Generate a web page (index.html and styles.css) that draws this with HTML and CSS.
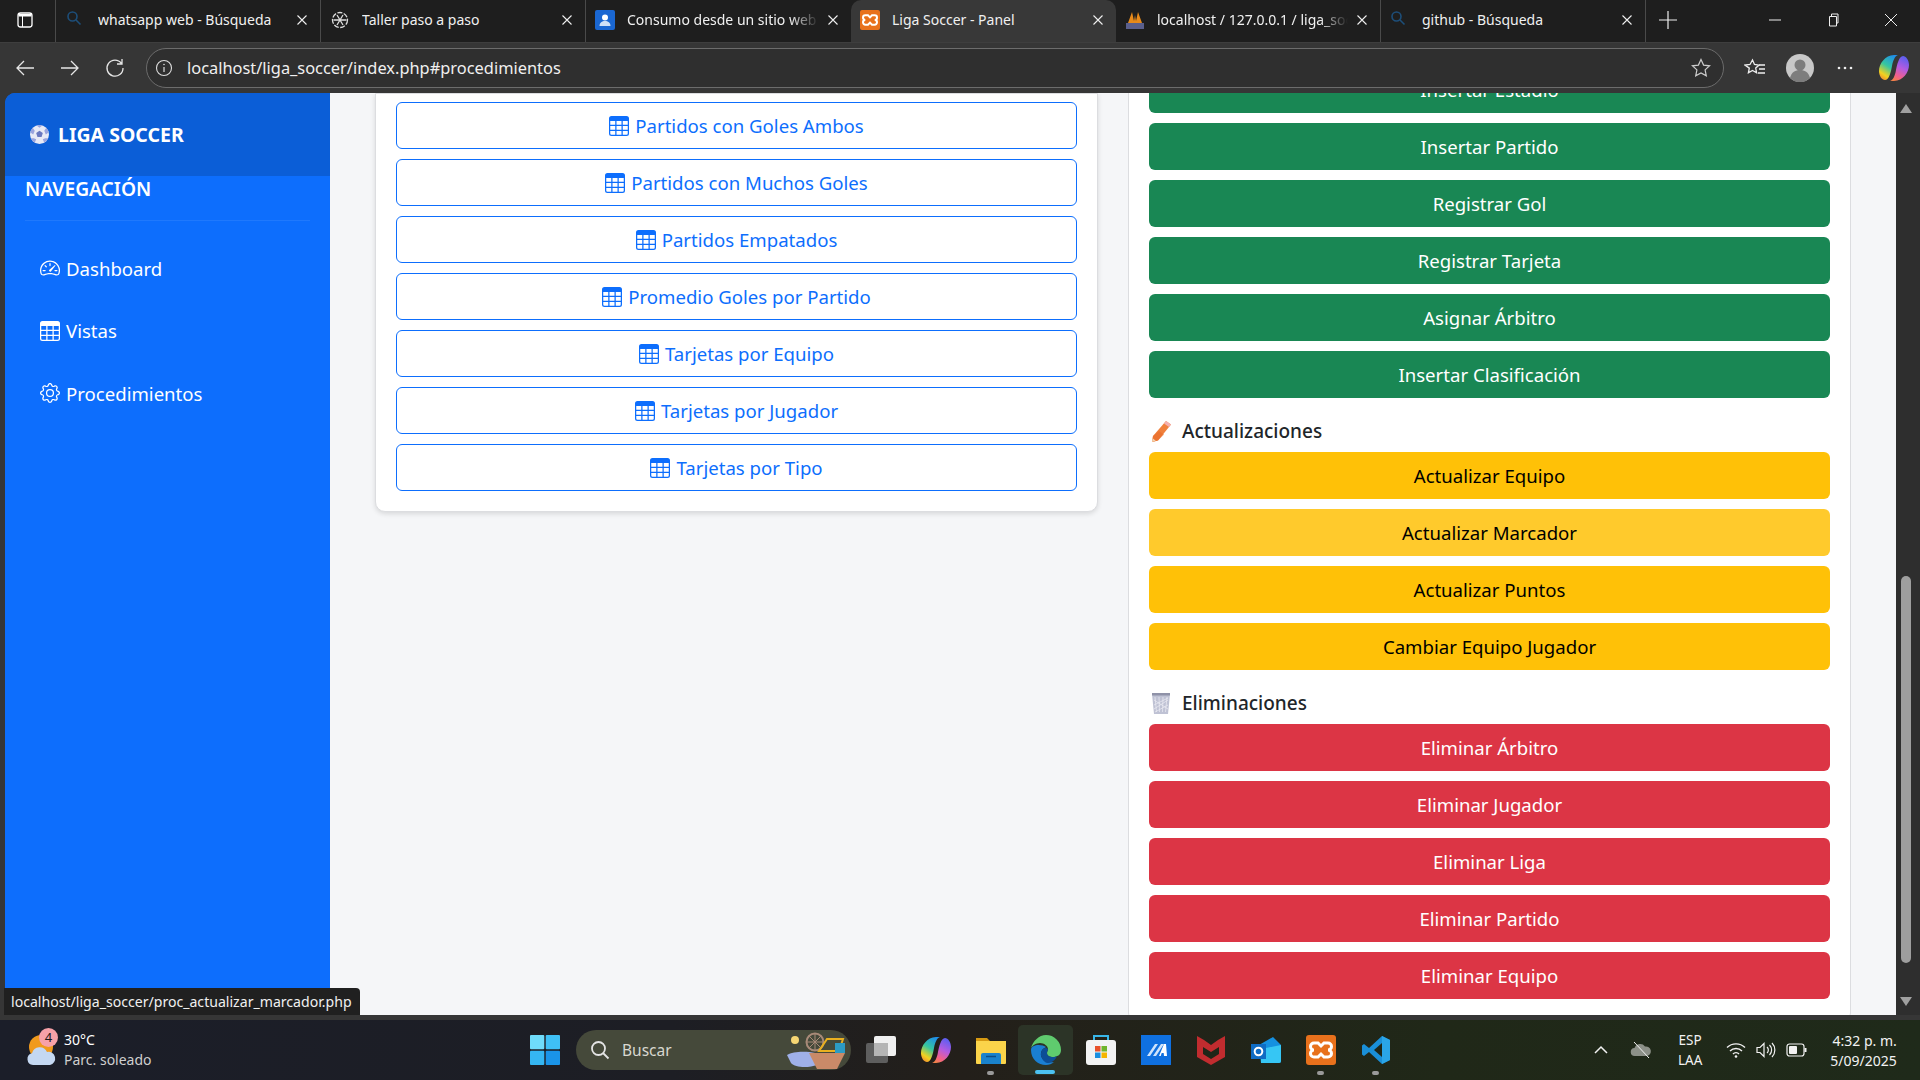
FILE: index.html
```html
<!DOCTYPE html>
<html lang="es">
<head>
    <meta charset="UTF-8">
    <title>Liga Soccer - Panel</title>
    <link rel="stylesheet" href="styles.css">
</head>
<body>
    <svg class="defs" width="0" height="0">
        <defs>
            <linearGradient id="g-left" x1="0.700" y1="0" x2="0.200" y2="1"><stop offset="0" stop-color="#1f8fe8"/><stop offset=".45" stop-color="#36c6a0"/><stop offset=".8" stop-color="#f2d21f"/><stop offset="1" stop-color="#f09030"/></linearGradient>
            <linearGradient id="g-right" x1="0.700" y1="0" x2="0.300" y2="1"><stop offset="0" stop-color="#5a5ff0"/><stop offset=".45" stop-color="#b45be0"/><stop offset=".8" stop-color="#f2608a"/><stop offset="1" stop-color="#f2804a"/></linearGradient>
        </defs>
        <symbol id="i-table" viewBox="0 0 16 16"><path fill="currentColor" d="M0 2a2 2 0 0 1 2-2h12a2 2 0 0 1 2 2v12a2 2 0 0 1-2 2H2a2 2 0 0 1-2-2V2zm15 2h-4v3h4V4zm0 4h-4v3h4V8zm0 4h-4v3h3a1 1 0 0 0 1-1v-2zm-5 3v-3H6v3h4zm-5 0v-3H1v2a1 1 0 0 0 1 1h3zm-4-4h4V8H1v3zm0-4h4V4H1v3zm5-3v3h4V4H6zm4 4H6v3h4V8z"/></symbol>
        <symbol id="i-close" viewBox="0 0 12 12"><path d="M1.5 1.5l9 9M10.500 1.500l-9 9" stroke="currentColor" stroke-width="1.1" fill="none"/></symbol>
        <symbol id="i-search" viewBox="0 0 20 20"><circle cx="6.500" cy="6.500" r="4.500" fill="none" stroke="#1d4e79" stroke-width="1.600"/><path d="M10 10l4.500 4.500" stroke="#1d4e79" stroke-width="1.600"/></symbol>
        <symbol id="i-xampp" viewBox="0 0 30 30"><rect width="30" height="30" rx="3" fill="#e8711c"/><path d="M8 8h4l3 3 3-3h4a3 3 0 0 1 0 7 3 3 0 0 1 0 7h-4l-3-3-3 3H8a3 3 0 0 1 0-7 3 3 0 0 1 0-7z" fill="none" stroke="#fff" stroke-width="3"/></symbol>
        <symbol id="i-copilot" viewBox="0 0 30 28"><path d="M15 1h4c-3 1-5 5-6 11-1 6-3 14-7 14-3 0-6-4-6-9C0 10 6 1 15 1z" fill="url(#g-left)"/><path d="M15 27h-4c3-1 5-5 6-11 1-5 3-14 7-14 3 0 6 4 6 9 0 7-6 16-15 16z" fill="url(#g-right)"/></symbol>
    </svg>

    <div class="tabstrip">
        <svg class="side-toggle" width="20" height="20" viewBox="0 0 20 20"><rect x="3" y="3" width="14" height="14" rx="2.500" fill="none" stroke="#fff" stroke-width="1.300"/><path d="M3.500 4h13v2.500h-13z" fill="#fff"/><path d="M7.500 6v11" stroke="#fff" stroke-width="1"/></svg>
        <div class="tab sep first">
            <svg class="favicon"><use href="#i-search"/></svg>
            <span class="tab-title">whatsapp web - Búsqueda</span>
            <svg class="tab-close"><use href="#i-close"/></svg>
        </div>
        <div class="tab sep">
            <svg class="favicon" viewBox="0 0 20 20"><g fill="none" stroke="#ddd" stroke-width="1.300"><circle cx="10" cy="10" r="7.500" stroke-dasharray="5 1.500"/><path d="M7 5l6 10M13 5L7 15M3.500 10h13"/></g></svg>
            <span class="tab-title">Taller paso a paso</span>
            <svg class="tab-close"><use href="#i-close"/></svg>
        </div>
        <div class="tab">
            <svg class="favicon" viewBox="0 0 20 20"><rect width="20" height="20" rx="2" fill="#1a67d2"/><circle cx="10" cy="7.500" r="3" fill="#fff"/><path d="M4.500 16c0-3.500 2.500-5 5.500-5s5.500 1.500 5.500 5z" fill="#cfe0f7"/></svg>
            <span class="tab-title fade">Consumo desde un sitio web</span>
            <svg class="tab-close"><use href="#i-close"/></svg>
        </div>
        <div class="tab tab-active">
            <svg class="favicon"><use href="#i-xampp"/></svg>
            <span class="tab-title">Liga Soccer - Panel</span>
            <svg class="tab-close"><use href="#i-close"/></svg>
        </div>
        <div class="tab sep">
            <svg class="favicon" viewBox="0 0 20 20"><path d="M3 13L7 2l2 9 1-6 1 6 2-9 4 11z" fill="#e88a1a"/><rect x="1" y="13" width="18" height="6" fill="#5a5f8c"/></svg>
            <span class="tab-title fade">localhost / 127.0.0.1 / liga_soccer</span>
            <svg class="tab-close"><use href="#i-close"/></svg>
        </div>
        <div class="tab sep">
            <svg class="favicon"><use href="#i-search"/></svg>
            <span class="tab-title">github - Búsqueda</span>
            <svg class="tab-close"><use href="#i-close"/></svg>
        </div>
        <svg class="new-tab" width="20" height="20" viewBox="0 0 20 20"><path d="M10 1v18M1 10h18" stroke="#eee" stroke-width="1.200"/></svg>
        <div class="win-btns">
            <svg width="14" height="14" viewBox="0 0 14 14"><path d="M1 7h12" stroke="#eee" stroke-width="1"/></svg>
            <svg width="14" height="14" viewBox="0 0 14 14"><path d="M3.500 3.500h7v9.500h-7zM5.500 3.500V1h6.500v9h-1.500" fill="none" stroke="#eee" stroke-width="1"/></svg>
            <svg width="14" height="14" viewBox="0 0 14 14"><path d="M1 1l12 12M13 1L1 13" stroke="#eee" stroke-width="1"/></svg>
        </div>
    </div>

    <div class="toolbar">
        <svg class="nav-ico" viewBox="0 0 22 22"><path d="M20 11H3M10 4l-7 7 7 7" fill="none" stroke="#e6e6e6" stroke-width="1.300"/></svg>
        <svg class="nav-ico" viewBox="0 0 22 22"><path d="M2 11h17M12 4l7 7-7 7" fill="none" stroke="#e6e6e6" stroke-width="1.300"/></svg>
        <svg class="nav-ico" viewBox="0 0 22 22"><path d="M17.500 6.500A8 8 0 1 0 19 11M18 2v5h-5" fill="none" stroke="#e6e6e6" stroke-width="1.300"/></svg>
        <div class="addressbar">
            <svg width="18" height="18" viewBox="0 0 18 18"><circle cx="9" cy="9" r="7.500" fill="none" stroke="#ddd" stroke-width="1.100"/><path d="M9 8v5" stroke="#ddd" stroke-width="1.200"/><circle cx="9" cy="5.500" r=".8" fill="#ddd"/></svg>
            <span class="url">localhost/liga_soccer/index.php#procedimientos</span>
            <svg class="star" width="22" height="22" viewBox="0 0 22 22"><path d="M11 2.500l2.600 5.600 6 .7-4.500 4.100 1.200 6L11 16l-5.300 2.900 1.200-6-4.500-4.100 6-.7z" fill="none" stroke="#ccc" stroke-width="1.200"/></svg>
        </div>
        <div class="tool-icons">
            <svg width="22" height="22" viewBox="0 0 22 22"><path d="M8.500 3l2 4.500 4.500.6-3.300 3 .9 4.700-4.100-2.400-4.100 2.400.9-4.700L1 8.100l5-.6z" fill="none" stroke="#eee" stroke-width="1.300"/><path d="M15 8h6M15 12h6M14 16h7" stroke="#eee" stroke-width="1.300"/></svg>
            <svg width="28" height="28" viewBox="0 0 28 28"><circle cx="14" cy="14" r="14" fill="#c8c8c8"/><circle cx="14" cy="11" r="5.500" fill="#7d7d7d"/><path d="M4 24c1.500-6 5.500-8 10-8s8.500 2 10 8a14 14 0 0 1-20 0z" fill="#7d7d7d"/></svg>
            <svg width="22" height="22" viewBox="0 0 22 22"><g fill="#eee"><circle cx="5" cy="11" r="1.300"/><circle cx="11" cy="11" r="1.300"/><circle cx="17" cy="11" r="1.300"/></g></svg>
            <svg class="tool-copilot" width="30" height="28"><use href="#i-copilot"/></svg>
        </div>
    </div>

    <div class="viewport">
        <aside class="sidebar">
            <div class="brand">
                <svg class="ball" width="19" height="19" viewBox="0 0 20 20"><circle cx="10" cy="10" r="10" fill="#e8eaf6"/><path d="M10 6l3.500 2.500-1.300 4.200H7.800L6.500 8.500z" fill="#6a78c0"/><path d="M7 .5L10 3l3-2.500A10 10 0 0 0 7 .5zM.4 8l3 2L5 6 2.800 3A10 10 0 0 0 .4 8zM19.600 8l-3 2L15 6l2.200-3A10 10 0 0 1 19.600 8zM5 18.600l1.500-3.600L4 14H.9A10 10 0 0 0 5 18.600zM15 18.600L13.500 15l2.500-1h3.100A10 10 0 0 1 15 18.600z" fill="#9aa4de"/></svg>
                <span>LIGA SOCCER</span>
            </div>
            <div class="nav-title">NAVEGACIÓN</div>
            <nav class="nav-list">
                <a class="nav-link">
                    <svg width="20" height="20" viewBox="0 0 16 16"><g fill="currentColor"><path d="M8 4a.5.5 0 0 1 .5.5V6a.5.5 0 0 1-1 0V4.500A.5.5 0 0 1 8 4zM3.732 5.732a.5.5 0 0 1 .707 0l.915.914a.5.5 0 1 1-.708.708l-.914-.915a.5.5 0 0 1 0-.707zM2 10a.5.5 0 0 1 .5-.5h1.586a.5.5 0 0 1 0 1H2.500A.5.5 0 0 1 2 10zm9.500 0a.5.5 0 0 1 .5-.5h1.500a.5.5 0 0 1 0 1H12a.5.5 0 0 1-.5-.5zm.754-4.246a.389.389 0 0 0-.527-.02L7.547 9.310a.91.91 0 1 0 1.302 1.258l3.434-4.297a.389.389 0 0 0-.029-.518z"/><path fill-rule="evenodd" d="M0 10a8 8 0 1 1 15.547 2.661c-.442 1.253-1.845 1.602-2.932 1.250C11.309 13.488 9.475 13 8 13c-1.474 0-3.310.488-4.615.911-1.087.352-2.490.003-2.932-1.250A7.988 7.988 0 0 1 0 10zm8-7a7 7 0 0 0-6.603 9.329c.203.575.923.876 1.680.630C4.397 12.533 6.358 12 8 12s3.604.532 4.923.96c.757.245 1.477-.056 1.680-.631A7 7 0 0 0 8 3z"/></g></svg>
                    Dashboard
                </a>
                <a class="nav-link">
                    <svg width="20" height="20"><use href="#i-table"/></svg>
                    Vistas
                </a>
                <a class="nav-link">
                    <svg width="20" height="20" viewBox="0 0 16 16"><g fill="currentColor"><path d="M8 4.754a3.246 3.246 0 1 0 0 6.492 3.246 3.246 0 0 0 0-6.492zM5.754 8a2.246 2.246 0 1 1 4.492 0 2.246 2.246 0 0 1-4.492 0z"/><path d="M9.796 1.343c-.527-1.790-3.065-1.790-3.592 0l-.094.319a.873.873 0 0 1-1.255.520l-.292-.16c-1.640-.892-3.433.902-2.540 2.541l.159.292a.873.873 0 0 1-.520 1.255l-.319.094c-1.790.527-1.790 3.065 0 3.592l.319.094a.873.873 0 0 1 .520 1.255l-.16.292c-.892 1.640.901 3.434 2.541 2.540l.292-.159a.873.873 0 0 1 1.255.520l.094.319c.527 1.790 3.065 1.790 3.592 0l.094-.319a.873.873 0 0 1 1.255-.520l.292.16c1.640.893 3.434-.902 2.540-2.541l-.159-.292a.873.873 0 0 1 .520-1.255l.319-.094c1.790-.527 1.790-3.065 0-3.592l-.319-.094a.873.873 0 0 1-.520-1.255l.16-.292c.893-1.640-.902-3.433-2.541-2.540l-.292.159a.873.873 0 0 1-1.255-.520l-.094-.319zm-2.633.283c.246-.835 1.428-.835 1.674 0l.094.319a1.873 1.873 0 0 0 2.693 1.115l.291-.16c.764-.415 1.600.420 1.184 1.185l-.159.292a1.873 1.873 0 0 0 1.116 2.692l.318.094c.835.246.835 1.428 0 1.674l-.319.094a1.873 1.873 0 0 0-1.115 2.693l.16.291c.415.764-.420 1.600-1.185 1.184l-.291-.159a1.873 1.873 0 0 0-2.693 1.116l-.094.318c-.246.835-1.428.835-1.674 0l-.094-.319a1.873 1.873 0 0 0-2.692-1.115l-.292.16c-.764.415-1.600-.420-1.184-1.185l.159-.291A1.873 1.873 0 0 0 1.945 8.930l-.319-.094c-.835-.246-.835-1.428 0-1.674l.319-.094A1.873 1.873 0 0 0 3.060 4.377l-.16-.292c-.415-.764.420-1.600 1.185-1.184l.292.159a1.873 1.873 0 0 0 2.692-1.115l.094-.319z"/></g></svg>
                    Procedimientos
                </a>
            </nav>
        </aside>

        <main class="content">
            <section class="card card-left">
                <a class="btn btn-outline"><svg width="20" height="20"><use href="#i-table"/></svg>Partidos con Goles Ambos</a>
                <a class="btn btn-outline"><svg width="20" height="20"><use href="#i-table"/></svg>Partidos con Muchos Goles</a>
                <a class="btn btn-outline"><svg width="20" height="20"><use href="#i-table"/></svg>Partidos Empatados</a>
                <a class="btn btn-outline"><svg width="20" height="20"><use href="#i-table"/></svg>Promedio Goles por Partido</a>
                <a class="btn btn-outline"><svg width="20" height="20"><use href="#i-table"/></svg>Tarjetas por Equipo</a>
                <a class="btn btn-outline"><svg width="20" height="20"><use href="#i-table"/></svg>Tarjetas por Jugador</a>
                <a class="btn btn-outline"><svg width="20" height="20"><use href="#i-table"/></svg>Tarjetas por Tipo</a>
            </section>

            <section class="card card-right">
                <a class="btn btn-green">Insertar Estadio</a>
                <a class="btn btn-green">Insertar Partido</a>
                <a class="btn btn-green">Registrar Gol</a>
                <a class="btn btn-green">Registrar Tarjeta</a>
                <a class="btn btn-green">Asignar Árbitro</a>
                <a class="btn btn-green">Insertar Clasificación</a>

                <h5 class="group-title">
                    <svg width="22" height="22" viewBox="0 0 22 22"><path d="M16 1l5 3.500L8 20.500 2 22l1-6z" fill="#f0803c"/><path d="M9 11l5 3.500-6 6L2 22l1-6z" fill="#e86a28" opacity=".6"/><path d="M16 1l5 3.500-2 2.500-5-3.500z" fill="#f5b0b0"/><path d="M2 22l.6-3.800 3.200 2.500z" fill="#f4d4b0"/></svg>
                    Actualizaciones
                </h5>
                <a class="btn btn-yellow">Actualizar Equipo</a>
                <a class="btn btn-yellow btn-hover">Actualizar Marcador</a>
                <a class="btn btn-yellow">Actualizar Puntos</a>
                <a class="btn btn-yellow">Cambiar Equipo Jugador</a>

                <h5 class="group-title">
                    <svg width="22" height="22" viewBox="0 0 22 22"><path d="M2 2h18l-2 20H4z" fill="#bfc2d4"/><path d="M2 1h18v2.500H2z" fill="#8f92a8"/><path d="M5 5l1.500 15M9 5l.5 15M13 5l-.5 15M17 5l-1.500 15M4 8l14 9M18 8L4 17M4 13l14-7M18 13L5 20" stroke="#ecedf4" stroke-width=".7"/></svg>
                    Eliminaciones
                </h5>
                <a class="btn btn-red">Eliminar Árbitro</a>
                <a class="btn btn-red">Eliminar Jugador</a>
                <a class="btn btn-red">Eliminar Liga</a>
                <a class="btn btn-red">Eliminar Partido</a>
                <a class="btn btn-red">Eliminar Equipo</a>
            </section>
        </main>

        <div class="scrollbar">
            <span class="arrow-up"></span>
            <span class="thumb"></span>
            <span class="arrow-down"></span>
        </div>

        <div class="status-bubble">localhost/liga_soccer/proc_actualizar_marcador.php</div>
    </div>

    <footer class="taskbar">
        <div class="weather">
            <svg class="weather-ico" width="30" height="34" viewBox="0 0 30 34"><circle cx="14" cy="14" r="12" fill="#f09a1c"/><path d="M6 32a6 6 0 0 1-1-11.800A8 8 0 0 1 20 19a6.500 6.500 0 0 1 3 13z" fill="#c4d8f2"/></svg>
            <span class="badge">4</span>
            <div class="weather-text">
                <span>30°C</span>
                <span class="weather-sub">Parc. soleado</span>
            </div>
        </div>

        <svg class="start" width="30" height="30" viewBox="0 0 30 30"><rect width="14.300" height="14.300" rx="1" fill="#6fdcfa"/><rect x="15.700" width="14.300" height="14.300" rx="1" fill="#3fc0f5"/><rect y="15.700" width="14.300" height="14.300" rx="1" fill="#35b6f2"/><rect x="15.700" y="15.700" width="14.300" height="14.300" rx="1" fill="#1a94e8"/></svg>

        <div class="search-pill">
            <svg width="20" height="20" viewBox="0 0 20 20"><circle cx="8.500" cy="8.500" r="6.500" fill="none" stroke="#e4e4e4" stroke-width="1.800"/><path d="M13 13l5.500 5.500" stroke="#e4e4e4" stroke-width="1.800"/></svg>
            <span>Buscar</span>
            <svg class="search-art" width="64" height="38" viewBox="0 0 64 38"><circle cx="10" cy="9" r="4" fill="#f7d774"/><circle cx="30" cy="11" r="8.500" fill="none" stroke="#a88a78" stroke-width="2"/><path d="M30 3v16M22 11h16M24 5l12 12M36 5L24 17" stroke="#a88a78"/><path d="M34 20l8-12h16l-4 12z" fill="none" stroke="#e8b020" stroke-width="2"/><rect x="50" y="12" width="10" height="10" fill="#2c9bc4"/><path d="M2 24c6-4 20-4 28-2l2 12c-8 3-22 3-26-2z" fill="#9fb0e8"/><path d="M24 22h36l-8 16H32z" fill="#c98a68"/></svg>
        </div>

        <div class="task-icons">
            <span class="task-ico">
                <svg width="30" height="30" viewBox="0 0 30 30"><rect x="0" y="8" width="22" height="20" rx="2" fill="#5e5e5e"/><rect x="8" y="1" width="22" height="20" rx="2" fill="#f0f0f0"/><rect x="8" y="8" width="14" height="13" fill="#b5b5b5"/></svg>
            </span>
            <span class="task-ico">
                <svg width="30" height="28"><use href="#i-copilot"/></svg>
            </span>
            <span class="task-ico has-dot">
                <svg width="30" height="30" viewBox="0 0 30 30"><path d="M0 3h11l3 3h16v4H0z" fill="#d79a12"/><path d="M0 6h30v22a1 1 0 0 1-1 1H1a1 1 0 0 1-1-1z" fill="#fbd44a"/><path d="M5 29v-9a2 2 0 0 1 2-2h16a2 2 0 0 1 2 2v9z" fill="#1a82cc"/><path d="M10 21.500h10" stroke="#0c4d86" stroke-width="1.500"/></svg>
            </span>
            <span class="task-ico task-active">
                <svg width="30" height="30" viewBox="0 0 30 30"><path d="M15 0a15 15 0 0 1 15 15c0 5-4 7-8 7-3 0-6-1-6-4 0-1.500 1-2.500 1-4 0-3-4-6-8-6-4.500 0-8 3-9 5C2 6 8 0 15 0z" fill="#5fcb6e"/><path d="M0 15C0 24 7 30 15 30c3 0 6-1 8-3-2 .5-9 1-12-4-2-3-1-7 1-9 1-1 3-2 3-2-4-3-15-3-15 3z" fill="#1a7fd1"/><path d="M11 23c-2-3-1-7 1-9 2-1.500 4-1 5 0 0 1-1 2.500-1 4 0 3 3 4 6 4 2 0 3-.3 4-1-1 3-4 6-8 7-3 .4-6-2-7-5z" fill="#0c4e96"/></svg>
            </span>
            <span class="task-ico">
                <svg width="30" height="32" viewBox="0 0 30 32"><path d="M8 7V2h14v5" fill="none" stroke="#38b6e8" stroke-width="2"/><rect y="6" width="30" height="25" rx="3" fill="#f3f3f3"/><rect x="9" y="12" width="5.500" height="5.500" fill="#e8512a"/><rect x="15.500" y="12" width="5.500" height="5.500" fill="#6fb52c"/><rect x="9" y="18.500" width="5.500" height="5.500" fill="#1a8fe0"/><rect x="15.500" y="18.500" width="5.500" height="5.500" fill="#f5b500"/></svg>
            </span>
            <span class="task-ico">
                <svg width="30" height="30" viewBox="0 0 30 30"><rect width="30" height="30" fill="#0f70e0"/><path d="M6 21L14 9h3L9 21zM12 21l8-12h3l-8 12z" fill="#cfe4fb"/><path d="M18 21l5-12h2l1 12h-3l-.3-3h-2l-1 3z" fill="#fff"/></svg>
            </span>
            <span class="task-ico">
                <svg width="28" height="30" viewBox="0 0 28 30"><path d="M0 1l7 4 7 5 7-5 7-4v21l-14 8-14-8z" fill="#c12c2f"/><path d="M6 12l8 5 8-5v7l-8 5-8-5z" fill="#1f2618"/></svg>
            </span>
            <span class="task-ico">
                <svg width="30" height="30" viewBox="0 0 30 30"><path d="M8 10L22 2l8 8v16a2 2 0 0 1-2 2H10z" fill="#1590e0"/><path d="M10 14l20-4v16a2 2 0 0 1-2 2H10z" fill="#36c6f4"/><rect y="9" width="15" height="15" fill="#0f6cc4"/><circle cx="7.500" cy="16.500" r="3.800" fill="none" stroke="#fff" stroke-width="2"/></svg>
            </span>
            <span class="task-ico has-dot">
                <svg width="30" height="30"><use href="#i-xampp"/></svg>
            </span>
            <span class="task-ico has-dot">
                <svg width="30" height="30" viewBox="0 0 30 30"><path d="M21 1l8 4v20l-8 4L8 17l-5 4-2-1.500V10.500L3 9l5 4z" fill="#1a8fd8"/><path d="M21 1l8 4v20l-8 4z" fill="#2aa5e8"/><path d="M21 8l-8 7 8 7z" fill="#1f2618"/></svg>
            </span>
        </div>

        <div class="tray">
            <svg width="14" height="10" viewBox="0 0 14 10"><path d="M1 8l6-6 6 6" fill="none" stroke="#f2f2f2" stroke-width="1.500"/></svg>
            <svg class="tray-cloud" width="22" height="16" viewBox="0 0 22 16"><path d="M5 14a4 4 0 0 1-.5-8A6 6 0 0 1 15 4.500 4.500 4.500 0 0 1 17 14z" fill="#8c9088"/><path d="M4 0l15 16" stroke="#f2f2f2" stroke-width="1"/></svg>
            <div class="lang"><span>ESP</span><span>LAA</span></div>
            <div class="tray-icons">
                <svg width="20" height="18" viewBox="0 0 20 18"><g fill="none" stroke="#f2f2f2" stroke-width="1.400"><path d="M1 6.500a13 13 0 0 1 18 0M4 10a8.500 8.500 0 0 1 12 0M7 13a4 4 0 0 1 6 0"/></g><circle cx="10" cy="15.500" r="1.300" fill="#f2f2f2"/></svg>
                <svg width="20" height="18" viewBox="0 0 20 18"><g fill="none" stroke="#f2f2f2" stroke-width="1.200"><path d="M1 6.500h3l4-4v13l-4-4H1zM11 6a4 4 0 0 1 0 6M13.500 4a7 7 0 0 1 0 10M16 2a10 10 0 0 1 0 14"/></g></svg>
                <svg width="22" height="14" viewBox="0 0 22 14"><rect x="1" y="1" width="17" height="12" rx="2.500" fill="none" stroke="#f2f2f2" stroke-width="1.200"/><rect x="3" y="3" width="8" height="8" rx="1" fill="#f2f2f2"/><path d="M19.500 5v4" stroke="#f2f2f2" stroke-width="2"/></svg>
            </div>
            <div class="clock"><span>4:32 p. m.</span><span>5/09/2025</span></div>
        </div>
    </footer>
</body>
</html>
```

FILE: styles.css
```css
*{
    margin: 0;
    padding: 0;
    box-sizing: border-box;
}
html,body{
    height: 100%;
    overflow: hidden;
}
body{
    display: flex;
    flex-direction: column;
    width: 1920px;
    height: 1080px;
    background: #363636;
    font-family: "Noto Sans", "Liberation Sans", sans-serif;
    color: #fff;
}
.defs{
    position: absolute;
}

/* browser tabs */
.tabstrip{
    display: flex;
    align-items: center;
    flex: none;
    height: 42px;
    background: #1e1e1e;
}
.side-toggle{
    flex: none;
    width: 55px;
    height: 20px;
    margin-bottom: 2px;
    padding: 0 10px 0 5px;
}
.tab{
    display: flex;
    align-items: center;
    flex: none;
    width: 265px;
    height: 42px;
    padding: 0 12px 2px 9px;
    font-size: 14px;
    color: #f0f0f0;
}
.tab.sep{
    border-right: 1px solid #4a4a4a;
    background-clip: padding-box;
}
.tab.first{
    width: 266px;
    padding-left: 10px;
    border-left: 1px solid #4a4a4a;
}
.tab-active{
    background: #383838;
    border-radius: 10px 10px 0 0;
}
.favicon{
    flex: none;
    width: 20px;
    height: 20px;
    margin-right: 12px;
}
.tab-title{
    flex: 1;
    margin-top: -2px;
    overflow: hidden;
    white-space: nowrap;
}
.fade{
    -webkit-mask-image: linear-gradient(to right, #000 85%, transparent);
    mask-image: linear-gradient(to right, #000 85%, transparent);
}
.tab-close{
    flex: none;
    width: 12px;
    height: 12px;
    margin-left: 8px;
}
.new-tab{
    margin-bottom: 2px;
    margin-left: 12px;
}
.win-btns{
    display: flex;
    gap: 44px;
    margin-left: auto;
    margin-bottom: 2px;
    padding-right: 22px;
}

/* address row */
.toolbar{
    display: flex;
    align-items: center;
    flex: none;
    height: 51px;
    padding: 0 14px 0 14px;
    background: #363636;
    border-top: 1px solid #3e3e3e;
}
.nav-ico{
    flex: none;
    width: 22px;
    height: 22px;
    margin-right: 23px;
}
.addressbar{
    display: flex;
    align-items: center;
    flex: none;
    width: 1578px;
    height: 40px;
    margin-left: -3px;
    padding: 0 11px 0 8px;
    border: 1px solid #6c6c6c;
    border-radius: 20px;
    background: #2f2f2f;
}
.url{
    margin-top: -2px;
    margin-left: 14px;
    font-size: 16.400px;
    color: #f0f0f0;
}
.star{
    margin-left: auto;
}
.tool-icons{
    display: flex;
    align-items: center;
    gap: 20px;
    margin-left: 20px;
}
.tool-copilot{
    margin-left: 3px;
}

/* page area */
.viewport{
    position: relative;
    display: flex;
    flex: none;
    height: 922px;
    padding-left: 5px;
    overflow: hidden;
}
.sidebar{
    flex: none;
    width: 325px;
    background: #0d6efd;
    border-radius: 10px 0 0 0;
    overflow: hidden;
}
.brand{
    display: flex;
    align-items: center;
    gap: 9px;
    height: 83px;
    padding-left: 25px;
    background: #0b5ed7;
    font-size: 19.500px;
    font-weight: 700;
}
.nav-title{
    margin: -2px 20px 0;
    padding: 0 0 16px;
    border-bottom: 1px solid #1f79fd;
    font-size: 19.200px;
    font-weight: 600;
    line-height: 30px;
}
.nav-list{
    display: flex;
    flex-direction: column;
    gap: 20.500px;
    padding: 26px 35px 0;
}
.nav-link{
    display: flex;
    align-items: center;
    gap: 6px;
    height: 42px;
    font-size: 18.600px;
    color: #fff;
}
.content{
    display: grid;
    flex: 1;
    grid-template-columns: 723px 723px;
    column-gap: 30px;
    align-items: start;
    padding: 0 45px;
    background: #f5f6f8;
}
.card{
    display: flex;
    flex-direction: column;
    gap: 10px;
    padding: 8px 20px 20px;
    background: #fff;
    border: 1px solid #dcdde0;
    border-radius: 0 0 10px 10px;
}
.card-left{
    box-shadow: 0 2px 5px rgba(0,0,0,.12);
}
.card-right{
    min-height: 980px;
    margin-top: -50px;
    padding-top: 22px;
    border-radius: 10px;
}
.btn{
    display: flex;
    align-items: center;
    justify-content: center;
    gap: 6px;
    flex: none;
    height: 47px;
    border: 1px solid transparent;
    border-radius: 6px;
    font-size: 18.600px;
}
.btn-outline{
    border-color: #0d6efd;
    color: #0d6efd;
}
.btn-green{
    background: #198754;
}
.btn-yellow{
    background: #ffc107;
    color: #000;
}
.btn-hover{
    background: #ffca2c;
}
.btn-red{
    background: #dc3545;
}
.group-title{
    display: flex;
    align-items: center;
    gap: 10px;
    height: 26px;
    margin: 10px 0 -2px;
    padding-left: 1px;
    font-size: 19px;
    font-weight: 500;
    color: #212529;
}

/* page scrollbar */
.scrollbar{
    display: flex;
    flex-direction: column;
    align-items: center;
    flex: none;
    width: 24px;
    height: 100%;
    padding: 11px 5px 0 0;
    background: #2e2e2e;
}
.arrow-up,.arrow-down{
    width: 0;
    height: 0;
    border-left: 6px solid transparent;
    border-right: 6px solid transparent;
}
.arrow-up{
    border-bottom: 9px solid #a0a0a0;
}
.arrow-down{
    margin-top: 34px;
    border-top: 9px solid #a0a0a0;
}
.thumb{
    width: 10px;
    height: 387px;
    margin-top: 463px;
    border-radius: 5px;
    background: #9e9e9e;
}
.status-bubble{
    position: absolute;
    left: 4px;
    bottom: 0;
    height: 27px;
    padding: 0 8px 0 7px;
    background: #202020;
    border-radius: 0 4px 0 0;
    font-size: 14.100px;
    line-height: 27px;
    color: #f0f0f0;
}

/* windows taskbar */
.taskbar{
    position: relative;
    display: flex;
    align-items: center;
    flex: none;
    height: 60px;
    margin-top: 5px;
    background: linear-gradient(to right, #1b1e29 0%, #1d1e24 35%, #231f1a 50%, #202818 75%, #1f2a1a 100%);
}
.weather{
    position: relative;
    display: flex;
    align-items: center;
    flex: none;
    width: 530px;
    padding-left: 27px;
}
.badge{
    position: absolute;
    left: 39px;
    top: -4px;
    width: 19px;
    height: 19px;
    border-radius: 50%;
    background: #f7a1a8;
    color: #1a1a1a;
    font-size: 13px;
    line-height: 19px;
    text-align: center;
}
.weather-text{
    display: flex;
    flex-direction: column;
    gap: 1px;
    margin-top: -2px;
    margin-left: 7px;
    font-size: 14px;
    line-height: 19px;
}
.weather-sub{
    color: #cfcfcf;
}
.start{
    flex: none;
}
.search-pill{
    display: flex;
    align-items: center;
    flex: none;
    width: 275px;
    height: 40px;
    margin-left: 16px;
    padding: 0 2px 0 14px;
    border-radius: 20px;
    background: #45493a;
    font-size: 15.500px;
    color: #d8d8d0;
}
.search-pill span{
    margin-left: 12px;
}
.search-art{
    margin-left: auto;
}
.task-icons{
    display: flex;
    flex: none;
    margin-left: 2px;
}
.task-ico{
    position: relative;
    display: flex;
    align-items: center;
    justify-content: center;
    width: 55px;
    height: 50px;
}
.has-dot::after{
    content: "";
    position: absolute;
    bottom: 0;
    left: 24px;
    width: 7px;
    height: 4px;
    border-radius: 2px;
    background: #9a9a9a;
}
.task-active{
    background: #2c3427;
    border-radius: 5px;
}
.task-active::after{
    content: "";
    position: absolute;
    bottom: 1px;
    left: 17px;
    width: 20px;
    height: 4px;
    border-radius: 2px;
    background: #4cc2f1;
}
.tray{
    display: flex;
    align-items: center;
    flex: none;
    margin-left: 191px;
    font-size: 13.500px;
    color: #f2f2f2;
}
.tray-cloud{
    margin-left: 22px;
}
.lang{
    display: flex;
    flex-direction: column;
    align-items: center;
    gap: 1px;
    margin-left: 26px;
    line-height: 19px;
}
.tray-icons{
    display: flex;
    align-items: center;
    gap: 10px;
    margin-left: 24px;
}
.clock{
    display: flex;
    flex-direction: column;
    align-items: flex-end;
    gap: 1px;
    margin-left: 22px;
    font-size: 14px;
    line-height: 19px;
}
```
